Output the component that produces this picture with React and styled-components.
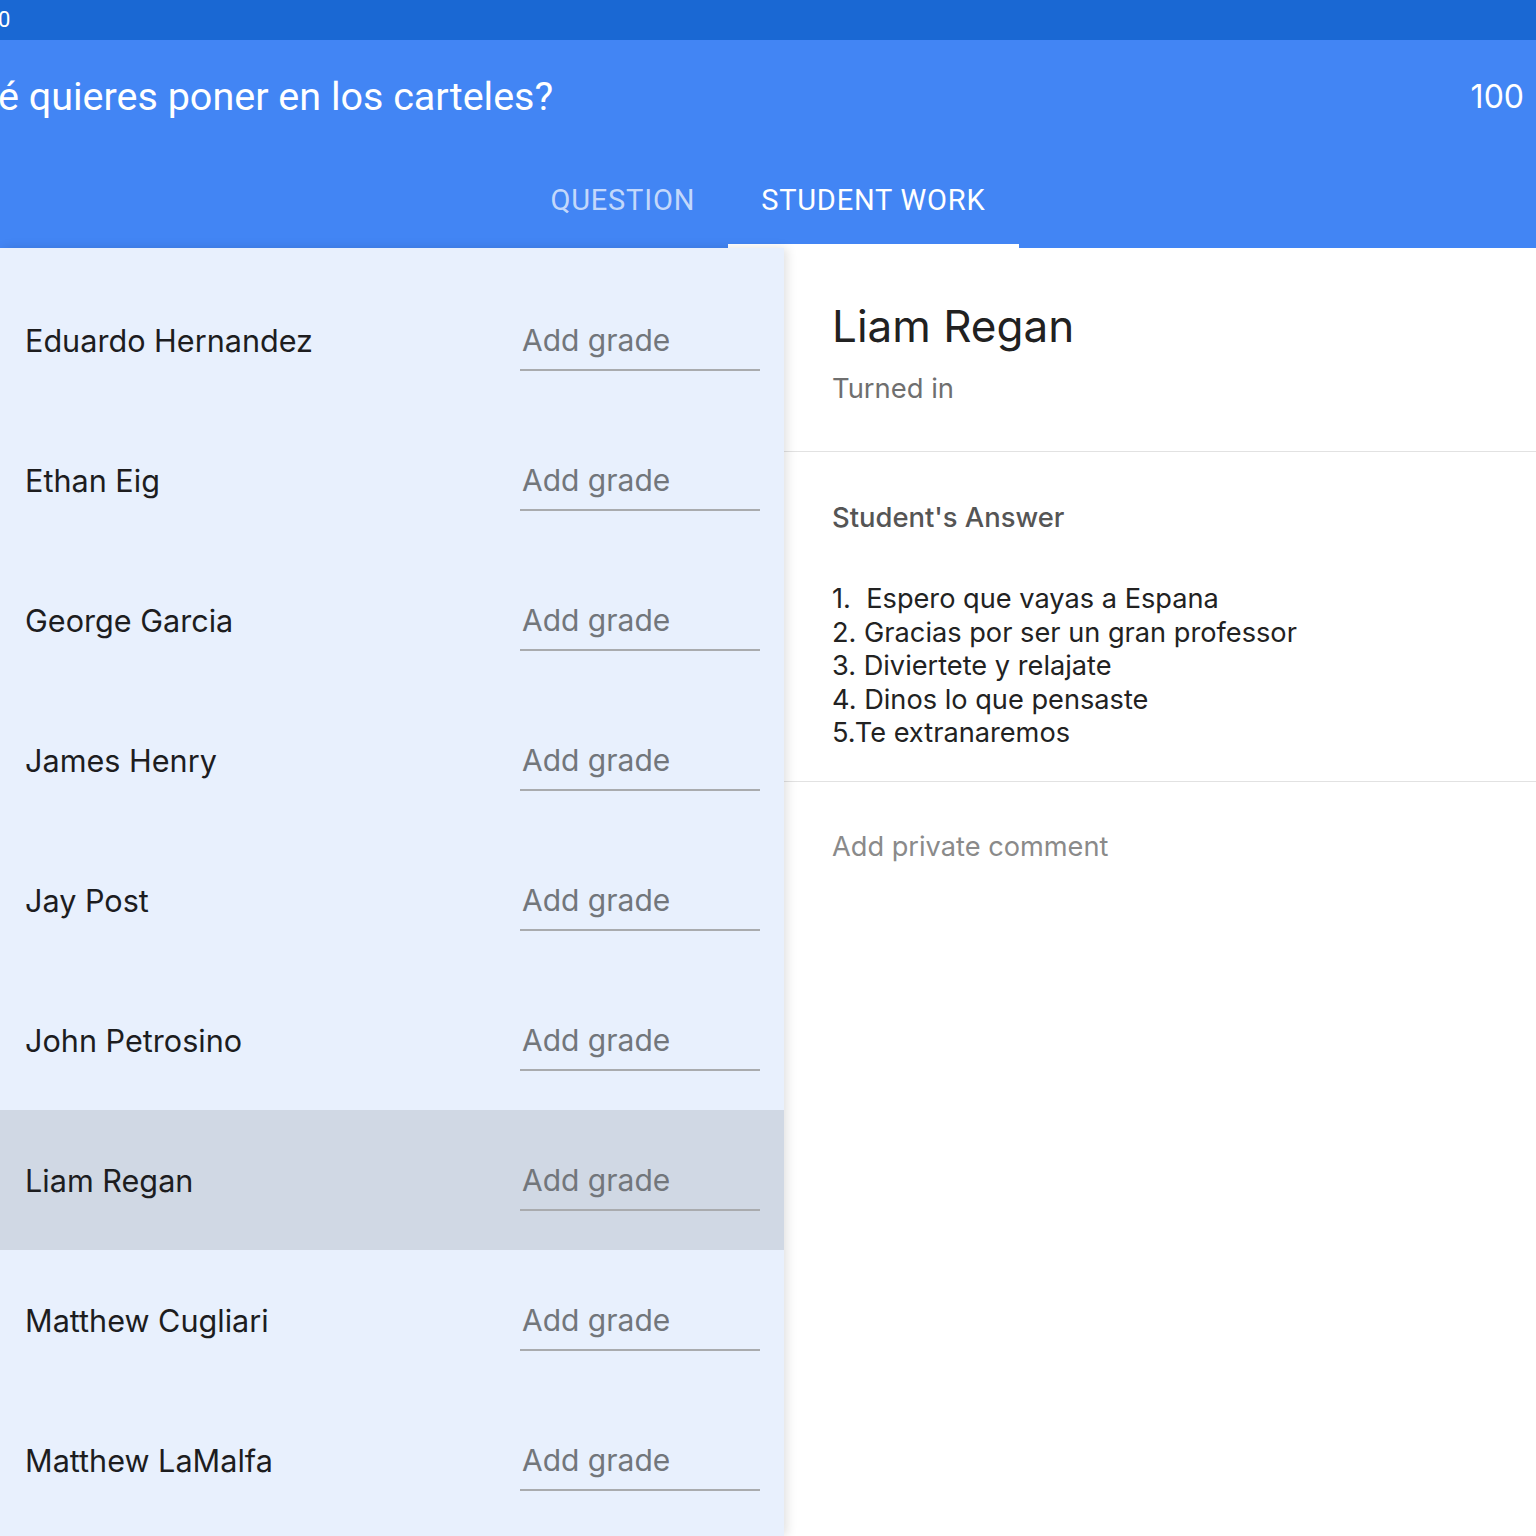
import React from 'react';
import styled, { createGlobalStyle } from 'styled-components';

const students = [
  'Eduardo Hernandez',
  'Ethan Eig',
  'George Garcia',
  'James Henry',
  'Jay Post',
  'John Petrosino',
  'Liam Regan',
  'Matthew Cugliari',
  'Matthew LaMalfa',
];

const answer = [
  '1.  Espero que vayas a Espana',
  '2. Gracias por ser un gran professor',
  '3. Diviertete y relajate',
  '4. Dinos lo que pensaste',
  '5.Te extranaremos',
];

export default function App() {
  const selected = 'Liam Regan';
  return (
    <>
      <GlobalStyle />
      <Page>
        <StatusBar>0</StatusBar>
        <Header>
          <TitleRow>
            <Title>é quieres poner en los carteles?</Title>
            <Points>100</Points>
          </TitleRow>
          <Tabs>
            <Tab>QUESTION</Tab>
            <Tab active>STUDENT WORK</Tab>
          </Tabs>
        </Header>
        <Body>
          <List>
            {students.map((name) => (
              <Row key={name} selected={name === selected}>
                <Name>{name}</Name>
                <GradeField>Add grade</GradeField>
              </Row>
            ))}
          </List>
          <Detail>
            <DetailHead>
              <StudentName>{selected}</StudentName>
              <Status>Turned in</Status>
            </DetailHead>
            <Section>
              <SectionTitle>Student's Answer</SectionTitle>
              <Answer>
                {answer.map((line) => (
                  <AnswerLine key={line}>{line}</AnswerLine>
                ))}
              </Answer>
            </Section>
            <CommentSection>
              <Comment>Add private comment</Comment>
            </CommentSection>
          </Detail>
        </Body>
      </Page>
    </>
  );
}

const GlobalStyle = createGlobalStyle`
  body {
    margin: 0;
    background: #fff;
    font-family: Inter, "Noto Sans", sans-serif;
  }
`;
const Page = styled.div`
  display: flex;
  flex-direction: column;
  height: 1536px;
  overflow: hidden;
`;
const StatusBar = styled.div`
  height: 40px;
  background: #1a68d3;
  color: #fff;
  font-family: Roboto, sans-serif;
  font-size: 22px;
  line-height: 40px;
  margin-left: -2px;
`;
const Header = styled.header`
  background: #4285f4;
  color: #fff;
  font-family: Roboto, sans-serif;
`;
const TitleRow = styled.div`
  height: 112px;
  display: flex;
  align-items: center;
  justify-content: space-between;
  padding-right: 12px;
`;
const Title = styled.h1`
  margin: 0 0 0 -2px;
  font-size: 39.5px;
  font-weight: 400;
`;
const Points = styled.span`
  font-family: Inter, sans-serif;
  font-size: 32px;
`;
const Tabs = styled.nav`
  height: 96px;
  display: flex;
  justify-content: center;
`;
const Tab = styled.div`
  display: flex;
  align-items: center;
  padding: 0 33px;
  font-size: 29px;
  font-weight: 400;
  letter-spacing: 0.8px;
  color: ${(p) => (p.active ? '#fff' : 'rgba(255,255,255,0.7)')};
  box-shadow: ${(p) => (p.active ? 'inset 0 -4px 0 #fff' : 'none')};
`;
const Body = styled.div`
  flex: 1;
  display: flex;
`;
const List = styled.div`
  width: 784px;
  padding-top: 22px;
  background: #e8f0fd;
  box-shadow: 3px 0 10px rgba(0, 0, 0, 0.12);
  position: relative;
  z-index: 1;
`;
const Row = styled.div`
  height: 140px;
  display: flex;
  align-items: center;
  justify-content: space-between;
  padding: 0 24px 0 25px;
  background: ${(p) => (p.selected ? '#d0d8e4' : 'transparent')};
`;
const Name = styled.span`
  font-size: 30.6px;
  color: #1d1d1f;
`;
const GradeField = styled.div`
  align-self: flex-start;
  margin-top: 50px;
  width: 238px;
  padding-left: 2px;
  line-height: 40px;
  padding-bottom: 9px;
  border-bottom: 2px solid #a9abae;
  font-size: 30px;
  color: #72767b;
`;
const Detail = styled.div`
  flex: 1;
  background: #fff;
`;
const DetailHead = styled.div`
  padding: 48px 48px 45px 48px;
`;
const StudentName = styled.div`
  font-size: 44px;
  line-height: 60px;
  color: #212121;
`;
const Status = styled.div`
  margin-top: 14px;
  font-size: 27.4px;
  line-height: 36px;
  color: #6f6f6f;
`;
const Section = styled.section`
  border-top: 1px solid #e2e2e2;
  padding: 47px 48px 31px 48px;
`;
const SectionTitle = styled.div`
  font-size: 27.4px;
  line-height: 36px;
  font-weight: 500;
  color: #555;
`;
const Answer = styled.div`
  margin-top: 47px;
`;
const AnswerLine = styled.div`
  white-space: pre;
  font-size: 27.2px;
  line-height: 33.5px;
  color: #222;
`;
const CommentSection = styled.section`
  border-top: 1px solid #e2e2e2;
  padding: 47px 48px 0 48px;
`;
const Comment = styled.div`
  font-size: 27.2px;
  line-height: 36px;
  color: #8a8a8a;
`;
